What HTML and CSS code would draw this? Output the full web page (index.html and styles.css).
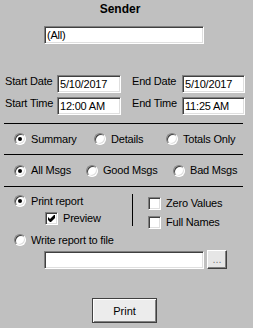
FILE: index.html
```
<!DOCTYPE html>
<html lang="en">
<head>
    <meta charset="UTF-8">
    <meta name="viewport" content="width=device-width, initial-scale=1.0">
    <title>Report - Sender</title>
    <link rel="stylesheet" href="styles.css">
</head>
<body>
    <div class="panel">
        <h1 class="title">Sender</h1>
        <input class="field sender" type="text" value="(All)">

        <div class="dates">
            <label class="field-label">Start Date</label>
            <input class="field" type="text" value="5/10/2017">
            <label class="field-label end">End Date</label>
            <input class="field" type="text" value="5/10/2017">
            <label class="field-label">Start Time</label>
            <input class="field" type="text" value="12:00 AM">
            <label class="field-label end">End Time</label>
            <input class="field" type="text" value="11:25 AM">
        </div>

        <div class="rule"></div>
        <div class="choices layout">
            <label class="option"><span class="radio on"></span>Summary</label>
            <label class="option"><span class="radio"></span>Details</label>
            <label class="option"><span class="radio"></span>Totals Only</label>
        </div>

        <div class="rule"></div>
        <div class="choices filter">
            <label class="option"><span class="radio on"></span>All Msgs</label>
            <label class="option"><span class="radio"></span>Good Msgs</label>
            <label class="option"><span class="radio"></span>Bad Msgs</label>
        </div>

        <div class="rule"></div>
        <div class="output">
            <div class="output-top">
                <div class="output-main">
                    <label class="option"><span class="radio on"></span>Print report</label>
                    <label class="option sub">
                        <span class="check">
                            <svg width="7" height="7" viewBox="0 0 7 7"><polygon points="0,2 2,4 6,0 7,0 7,3 3,7 2,7 0,5" fill="#000"/></svg>
                        </span>Preview
                    </label>
                </div>
                <div class="divider"></div>
                <div class="output-extra">
                    <label class="option"><span class="check"></span>Zero Values</label>
                    <label class="option"><span class="check"></span>Full Names</label>
                </div>
            </div>
            <label class="option write"><span class="radio"></span>Write report to file</label>
            <div class="file-row">
                <input class="field" type="text" value="">
                <button class="browse">...</button>
            </div>
            <button class="print">Print</button>
        </div>
    </div>
</body>
</html>
```

FILE: styles.css
```
* {
    box-sizing: border-box;
}
body {
    margin: 0;
    width: 253px;
    height: 328px;
    overflow: hidden;
    background: #c0c0c0;
    font-family: "Liberation Sans", Arial, sans-serif;
    font-size: 11px;
    letter-spacing: -0.2px;
    color: #000;
}
.title {
    margin: 0;
    padding-top: 2px;
    width: 240px;
    text-align: center;
    font-size: 12px;
    line-height: 14px;
    font-weight: bold;
    letter-spacing: 0;
}
.field {
    display: block;
    width: 100%;
    height: 18px;
    margin: 0;
    padding: 0 2px;
    border: 1px solid;
    border-color: #808080 #fff #fff #808080;
    box-shadow: inset 1px 1px 0 #404040, inset -1px -1px 0 #dfdfdf;
    background: #fff;
    font: 11px "Liberation Sans", Arial, sans-serif;
    letter-spacing: -0.2px;
    color: #000;
    outline: none;
}
.sender {
    width: 160px;
    margin: 10px 0 0 44px;
}
.dates {
    display: grid;
    grid-template-columns: 52px 64px 61px 63px;
    row-gap: 4px;
    margin-top: 31px;
    padding-left: 5px;
}
.field-label {
    line-height: 13px;
    white-space: nowrap;
}
.field-label.end {
    padding-left: 11px;
}
.rule {
    width: 239px;
    height: 1px;
    margin-left: 4px;
    background: #000;
}
.dates + .rule {
    margin-top: 8px;
}
.choices {
    display: grid;
    align-items: center;
    height: 30px;
    padding-left: 14px;
}
.choices.layout {
    grid-template-columns: 80px 72px auto;
}
.choices.filter {
    grid-template-columns: 72px 87px auto;
    height: 31px;
}
.option {
    display: flex;
    align-items: center;
    gap: 5px;
    line-height: 13px;
    white-space: nowrap;
}
.radio {
    position: relative;
    flex: none;
    width: 12px;
    height: 12px;
    border-radius: 50%;
    border: 1px solid;
    border-color: #808080 #fff #fff #808080;
    box-shadow: inset 1px 1px 0 #404040, inset -1px -1px 0 #dfdfdf;
    background: #fff;
}
.radio.on::after {
    content: "";
    position: absolute;
    left: 3px;
    top: 3px;
    width: 4px;
    height: 4px;
    border-radius: 50%;
    background: #000;
}
.check {
    display: flex;
    align-items: center;
    justify-content: center;
    flex: none;
    width: 13px;
    height: 13px;
    border: 1px solid;
    border-color: #808080 #fff #fff #808080;
    box-shadow: inset 1px 1px 0 #404040, inset -1px -1px 0 #dfdfdf;
    background: #fff;
}
.output {
    padding-top: 6px;
}
.output-top {
    display: flex;
    height: 39px;
}
.output-main {
    display: flex;
    flex-direction: column;
    gap: 1px;
    width: 132px;
}
.output-main .option {
    height: 16px;
    padding-left: 14px;
}
.output-main .option.sub {
    padding-left: 45px;
}
.divider {
    width: 1px;
    height: 32px;
    margin-top: 1px;
    background: #000;
}
.output-extra {
    display: flex;
    flex-direction: column;
    gap: 3px;
    padding: 2px 0 0 15px;
}
.output-extra .option {
    height: 16px;
}
.write {
    height: 16px;
    padding-left: 14px;
}
.file-row {
    display: flex;
    align-items: flex-end;
    gap: 3px;
    margin: 2px 0 0 44px;
}
.file-row .field {
    width: 160px;
}
button {
    margin: 0;
    padding: 0;
    font: 11px "Liberation Sans", Arial, sans-serif;
    color: #000;
    cursor: pointer;
}
.browse {
    width: 20px;
    height: 19px;
    border: 1px solid;
    border-color: #fff #404040 #404040 #fff;
    box-shadow: inset -1px -1px 0 #808080;
    background: #e6e6e6;
    color: #808080;
    line-height: 17px;
}
.print {
    display: block;
    width: 65px;
    height: 25px;
    margin: 29px 0 0 92px;
    border: 1px solid #404040;
    box-shadow: inset 1px 1px 0 #fff, inset -1px -1px 0 #808080;
    background: #ececec;
}
```
